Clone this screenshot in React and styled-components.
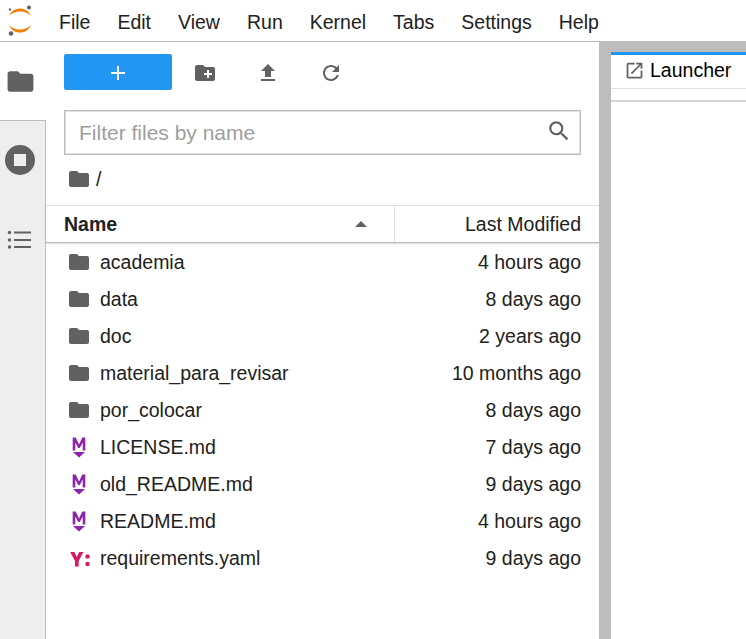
import React from 'react';
import styled, { createGlobalStyle } from 'styled-components';

const GlobalStyle = createGlobalStyle`
  html, body {
    margin: 0;
    padding: 0;
    height: 100%;
    overflow: hidden;
    background: #fff;
  }
  body {
    font-family: "Liberation Sans", Arial, sans-serif;
    color: #212121;
  }
`;

const Page = styled.div`
  width: 746px;
  height: 639px;
  display: flex;
  flex-direction: column;
  overflow: hidden;
`;

const MenuBar = styled.div`
  height: 41px;
  flex: none;
  display: flex;
  align-items: center;
  border-bottom: 1px solid #bdbdbd;
`;

const LogoBox = styled.div`
  width: 59px;
  height: 41px;
  flex: none;
  display: flex;
  align-items: center;
  padding-left: 6px;
  box-sizing: border-box;
`;

const MenuItems = styled.div`
  display: flex;
  gap: 27px;
  font-size: 19.5px;
  padding-top: 3px;
`;

const Body = styled.div`
  flex: 1;
  display: flex;
  min-height: 0;
`;

const SideBar = styled.div`
  width: 45px;
  flex: none;
  background: #eee;
  border-right: 1px solid #bdbdbd;
  display: flex;
  flex-direction: column;
`;

const SideTab = styled.div`
  height: ${p => p.$h}px;
  flex: none;
  display: flex;
  justify-content: center;
  align-items: center;
  width: ${p => (p.$active ? '46px' : '45px')};
  padding-right: ${p => (p.$active ? '6px' : '5px')};
  background: ${p => (p.$active ? '#fff' : 'transparent')};
  border-bottom: ${p => (p.$active ? '1px solid #bdbdbd' : 'none')};
  box-sizing: border-box;
  z-index: 1;
`;

const Browser = styled.div`
  width: 553px;
  flex: none;
  display: flex;
  flex-direction: column;
  background: #fff;
`;

const Toolbar = styled.div`
  height: 60px;
  flex: none;
  display: flex;
  align-items: center;
  padding: 0 0 0 18px;
  box-sizing: border-box;
`;

const NewButton = styled.div`
  width: 108px;
  height: 36px;
  border-radius: 2px;
  background: #2196f3;
  display: flex;
  align-items: center;
  justify-content: center;
  padding-top: 1px;
  box-sizing: border-box;
  margin-right: 12px;
`;

const ToolButton = styled.div`
  width: 42px;
  height: 36px;
  margin-right: ${p => p.$gap}px;
  padding-top: 2px;
  box-sizing: border-box;
  display: flex;
  align-items: center;
  justify-content: center;
`;

const Filter = styled.div`
  margin: 8px 18px 0 18px;
  height: 45px;
  box-sizing: border-box;
  border: 1px solid #bdbdbd;
  box-shadow: inset 0 0 0 1px #e0e0e0;
  display: flex;
  align-items: center;
  justify-content: space-between;
  padding: 1px 8px 0 14px;
  font-size: 21px;
  color: #9e9e9e;
`;

const SearchSlot = styled.div`
  display: flex;
  padding-bottom: 4px;
`;

const Crumbs = styled.div`
  height: 50px;
  flex: none;
  display: flex;
  align-items: center;
  padding: 0 0 2px 21px;
  box-sizing: border-box;
  gap: 5px;
  font-size: 19.5px;
`;

const HeaderRow = styled.div`
  height: 38px;
  flex: none;
  display: flex;
  box-sizing: border-box;
  border-top: 1px solid #e0e0e0;
  border-bottom: 1px solid #bdbdbd;
  box-shadow: 0 1px 1px rgba(0, 0, 0, 0.12);
  font-size: 19.5px;
`;

const NameHead = styled.div`
  width: 349px;
  box-sizing: border-box;
  padding: 0 27px 0 18px;
  display: flex;
  align-items: center;
  justify-content: space-between;
  font-weight: 700;
  border-right: 1px solid #e0e0e0;
`;

const ModifiedHead = styled.div`
  flex: 1;
  padding-right: 18px;
  display: flex;
  align-items: center;
  justify-content: flex-end;
`;

const SortArrow = styled.div`
  width: 0;
  height: 0;
  border-left: 6px solid transparent;
  border-right: 6px solid transparent;
  border-bottom: 6px solid #616161;
`;

const List = styled.div`
  padding-top: 1px;
`;

const Row = styled.div`
  height: 37px;
  display: flex;
  align-items: center;
  font-size: 19.5px;
  padding-right: 18px;
`;

const RowIcon = styled.div`
  width: 54px;
  flex: none;
  display: flex;
  justify-content: center;
  padding: 0 1px ${p => (p.$lift ? '2px' : '0')} 13px;
  box-sizing: border-box;
`;

const RowName = styled.div`
  flex: 1;
`;

const Splitter = styled.div`
  width: 12px;
  flex: none;
  background: #bdbdbd;
`;

const Main = styled.div`
  flex: 1;
  display: flex;
  flex-direction: column;
`;

const TabStrip = styled.div`
  height: 47px;
  flex: none;
  background: #bdbdbd;
  padding-top: 10px;
  box-sizing: border-box;
  display: flex;
`;

const Tab = styled.div`
  flex: 1;
  background: #fff;
  border-top: 3px solid #2196f3;
  border-bottom: 1px solid #e0e0e0;
  box-sizing: border-box;
  display: flex;
  align-items: center;
  gap: 5px;
  padding: 0 0 2px 13px;
  font-size: 19.5px;
  color: #000;
`;

const ToolStrip = styled.div`
  height: 13px;
  flex: none;
  border-bottom: 2px solid #d6d6d6;
  box-sizing: border-box;
`;

const Logo = () => (
  <svg width="30" height="36" viewBox="0 0 30 36">
    <path d="M3 13.5 C6 2.8 22 2.8 25 13.5 C21 6.8 7 6.8 3 13.5Z" fill="#f57c00" />
    <path d="M3 21.5 C6 32.2 22 32.2 25 21.5 C21 28.2 7 28.2 3 21.5Z" fill="#f57c00" />
    <circle cx="23" cy="4.5" r="2" fill="#616161" />
    <circle cx="5" cy="30.5" r="2.3" fill="#616161" />
    <circle cx="4" cy="6.5" r="1.2" fill="#616161" />
  </svg>
);

const FolderIcon = ({ size = 24 }) => (
  <svg width={size} height={size} viewBox="0 0 24 24" fill="#616161">
    <path d="M10 4H4c-1.1 0-2 .9-2 2v12c0 1.1.9 2 2 2h16c1.1 0 2-.9 2-2V8c0-1.1-.9-2-2-2h-8l-2-2z" />
  </svg>
);

const NewFolderIcon = () => (
  <svg width="24" height="24" viewBox="0 0 24 24" fill="#616161">
    <path d="M20 6h-8l-2-2H4c-1.11 0-2 .89-2 2v12c0 1.11.89 2 2 2h16c1.11 0 2-.89 2-2V8c0-1.11-.89-2-2-2zm-1 8h-3v3h-2v-3h-3v-2h3V9h2v3h3v2z" />
  </svg>
);

const UploadIcon = () => (
  <svg width="24" height="24" viewBox="0 0 24 24" fill="#616161">
    <path d="M9 16h6v-6h4l-7-7-7 7h4zm-4 2h14v2H5z" />
  </svg>
);

const RefreshIcon = () => (
  <svg width="24" height="24" viewBox="0 0 24 24" fill="#616161">
    <path d="M17.65 6.35C16.2 4.9 14.21 4 12 4c-4.42 0-7.99 3.58-7.99 8s3.57 8 7.99 8c3.73 0 6.84-2.55 7.73-6h-2.08c-.82 2.33-3.04 4-5.65 4-3.31 0-6-2.69-6-6s2.69-6 6-6c1.66 0 3.14.69 4.22 1.78L13 11h7V4l-2.35 2.35z" />
  </svg>
);

const SearchIcon = () => (
  <svg width="26" height="26" viewBox="0 0 24 24" fill="#616161">
    <path d="M15.5 14h-.79l-.28-.27A6.47 6.47 0 0 0 16 9.5 6.5 6.5 0 1 0 9.5 16c1.61 0 3.09-.59 4.23-1.57l.27.28v.79l5 4.99L20.49 19l-4.99-5zm-6 0C7.01 14 5 11.99 5 9.5S7.01 5 9.5 5 14 7.01 14 9.5 11.99 14 9.5 14z" />
  </svg>
);

const StopIcon = () => (
  <svg width="36" height="36" viewBox="0 0 24 24" fill="#616161">
    <path fillRule="evenodd" d="M12 2a10 10 0 1 0 0 20 10 10 0 0 0 0-20zM8 8h8v8H8z" />
  </svg>
);

const ListIcon = () => (
  <svg width="28" height="28" viewBox="0 0 28 28" fill="#616161">
    <circle cx="3.5" cy="6.5" r="1.7" />
    <circle cx="3.5" cy="14" r="1.7" />
    <circle cx="3.5" cy="21" r="1.7" />
    <rect x="8" y="5.5" width="17" height="2" />
    <rect x="8" y="13" width="17" height="2" />
    <rect x="8" y="20" width="17" height="2" />
  </svg>
);

const LauncherIcon = () => (
  <svg width="21" height="21" viewBox="0 0 24 24" fill="#616161">
    <path d="M19 19H5V5h7V3H5a2 2 0 0 0-2 2v14a2 2 0 0 0 2 2h14c1.1 0 2-.9 2-2v-7h-2v7zM14 3v2h3.59l-9.83 9.83 1.41 1.41L19 6.41V10h2V3h-7z" />
  </svg>
);

const MarkdownIcon = () => (
  <svg width="18" height="26" viewBox="0 0 18 26" fill="#8e24aa">
    <path d="M2.7 2.5h3L9 9.5l3.3-7h3v13h-2.6V7.5L9.8 13H8.2L5.3 7.5v8H2.7z" />
    <path d="M3 17h12L9 22.5z" />
  </svg>
);

const YamlIcon = () => (
  <svg width="22" height="20" viewBox="0 0 22 20" fill="#d81b60">
    <path d="M2.2 3h4.2L8.8 8l2.4-5h4.2l-4.7 9v5.5H7V12z" />
    <circle cx="19.5" cy="7.5" r="2.2" />
    <circle cx="19.5" cy="15" r="2.2" />
  </svg>
);

const files = [
  { name: 'academia', modified: '4 hours ago', type: 'folder' },
  { name: 'data', modified: '8 days ago', type: 'folder' },
  { name: 'doc', modified: '2 years ago', type: 'folder' },
  { name: 'material_para_revisar', modified: '10 months ago', type: 'folder' },
  { name: 'por_colocar', modified: '8 days ago', type: 'folder' },
  { name: 'LICENSE.md', modified: '7 days ago', type: 'md' },
  { name: 'old_README.md', modified: '9 days ago', type: 'md' },
  { name: 'README.md', modified: '4 hours ago', type: 'md' },
  { name: 'requirements.yaml', modified: '9 days ago', type: 'yaml' },
];

const icons = { folder: <FolderIcon />, md: <MarkdownIcon />, yaml: <YamlIcon /> };

const App = () => {
  return (
    <Page>
      <GlobalStyle />
      <MenuBar>
        <LogoBox><Logo /></LogoBox>
        <MenuItems>
          {['File', 'Edit', 'View', 'Run', 'Kernel', 'Tabs', 'Settings', 'Help'].map(m => (
            <span key={m}>{m}</span>
          ))}
        </MenuItems>
      </MenuBar>
      <Body>
        <SideBar>
          <SideTab $h={79} $active><FolderIcon size={31} /></SideTab>
          <SideTab $h={78}><StopIcon /></SideTab>
          <SideTab $h={82}><ListIcon /></SideTab>
        </SideBar>
        <Browser>
          <Toolbar>
            <NewButton>
              <svg width="16" height="16" viewBox="0 0 16 16" fill="#fff">
                <path d="M7 1h2v6h6v2H9v6H7V9H1V7h6z" />
              </svg>
            </NewButton>
            <ToolButton $gap={21}><NewFolderIcon /></ToolButton>
            <ToolButton $gap={21}><UploadIcon /></ToolButton>
            <ToolButton $gap={0}><RefreshIcon /></ToolButton>
          </Toolbar>
          <Filter>
            Filter files by name
            <SearchSlot><SearchIcon /></SearchSlot>
          </Filter>
          <Crumbs>
            <FolderIcon />
            /
          </Crumbs>
          <HeaderRow>
            <NameHead>Name<SortArrow /></NameHead>
            <ModifiedHead>Last Modified</ModifiedHead>
          </HeaderRow>
          <List>
            {files.map(f => (
              <Row key={f.name}>
                <RowIcon $lift={f.type === 'folder'}>{icons[f.type]}</RowIcon>
                <RowName>{f.name}</RowName>
                <span>{f.modified}</span>
              </Row>
            ))}
          </List>
        </Browser>
        <Splitter />
        <Main>
          <TabStrip>
            <Tab><LauncherIcon />Launcher</Tab>
          </TabStrip>
          <ToolStrip />
        </Main>
      </Body>
    </Page>
  );
};

export default App;
